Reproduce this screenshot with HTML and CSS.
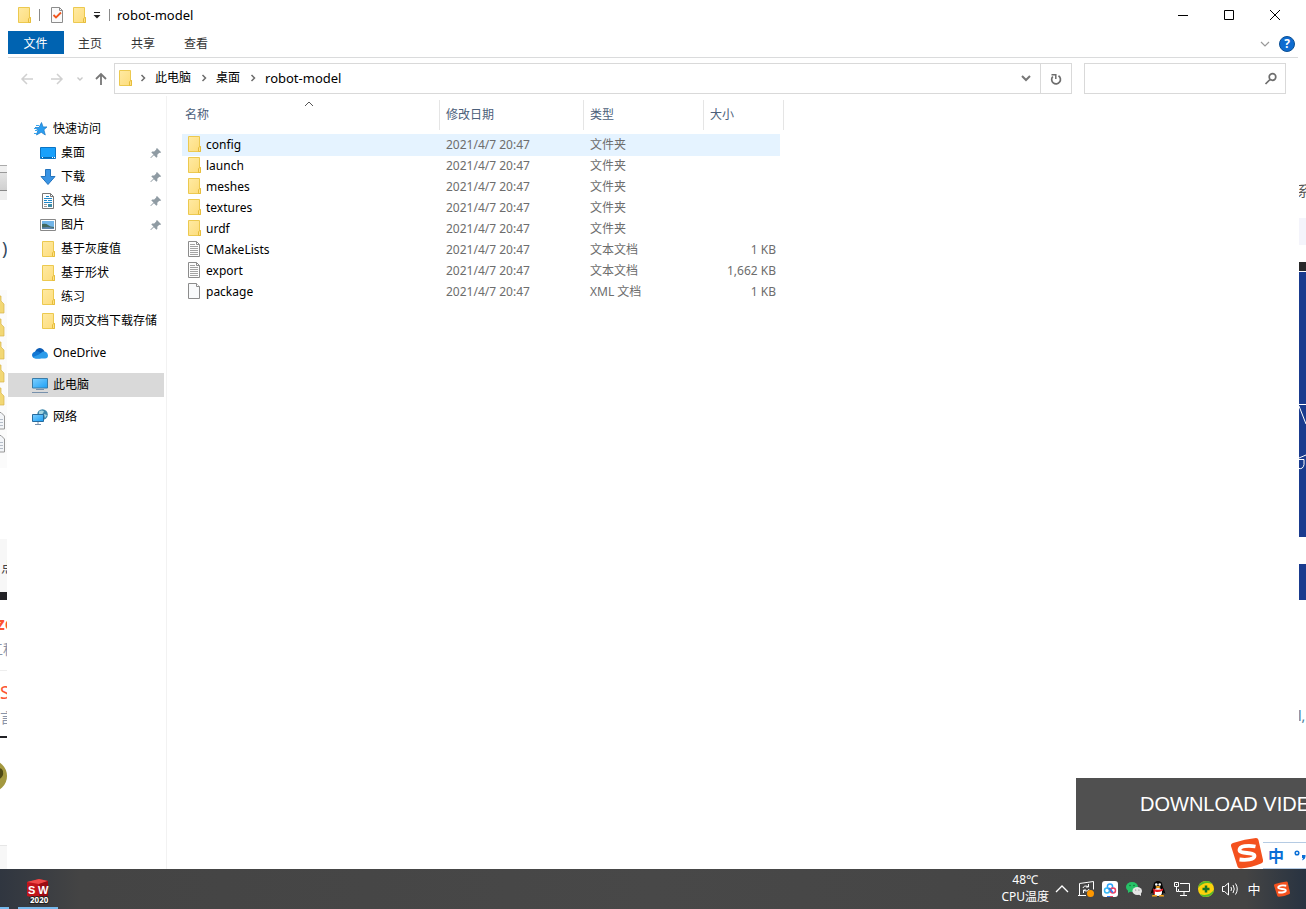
FILE: index.html
```
<!DOCTYPE html>
<html lang="zh-CN">
<head>
    <meta charset="UTF-8">
    <meta name="viewport" content="width=device-width, initial-scale=1.0">

    <title>robot-model</title>

    <link rel="stylesheet" href="styles.css">
</head>

<body>

    <!-- shared icons -->
    <svg class="defs" width="0" height="0" aria-hidden="true">
        <defs>
            <linearGradient id="gFolder" x1="0" y1="0" x2="1" y2="1">
                <stop offset="0" stop-color="#ffeaa3"/>
                <stop offset="1" stop-color="#fddc7a"/>
            </linearGradient>
            <linearGradient id="gScreen" x1="0" y1="0" x2="1" y2="1">
                <stop offset="0" stop-color="#7fd0ff"/>
                <stop offset="1" stop-color="#1c9ff5"/>
            </linearGradient>
        </defs>
        <symbol id="folder" viewBox="0 0 16 16">
            <path d="M2.500 .5h11v10h1v5h-12z" fill="url(#gFolder)" stroke="#ecc94f"/>
            <path d="M12.500 15.500v-3.500l1-1.500h1v5z" fill="#ffe287" stroke="#e6bd3c"/>
        </symbol>
        <symbol id="text-file" viewBox="0 0 16 16">
            <path d="M2.500 .5h8l3 3v12h-11z" fill="#fdfdfd" stroke="#8c8c8c"/>
            <path d="M10.500 .5v3h3" fill="none" stroke="#8c8c8c"/>
            <path d="M4 3.500h5M4 5.500h8M4 7.500h8M4 9.500h8M4 11.500h8M4 13.500h8" stroke="#a3a3a3"/>
        </symbol>
        <symbol id="blank-file" viewBox="0 0 16 16">
            <path d="M2.500 .5h8l3 3v12h-11z" fill="#f9fafb" stroke="#8c8c8c"/>
            <path d="M10.500 .5v3h3" fill="#fff" stroke="#8c8c8c"/>
        </symbol>
        <symbol id="pin" viewBox="0 0 12 12">
            <path d="M7 1l4.200 4.200-1.200.7-.7-.1-2 2 .1 2-1 .9L3.900 8.200 1 11H.5v-.5L3.500 7.600 1.300 5.400l.9-.9 2 .1 2-2L6.200 1.800z" fill="#8f9ba3"/>
        </symbol>
        <symbol id="crumb" viewBox="0 0 8 8">
            <path d="M2.500 1L5.500 4 2.500 7" fill="none" stroke="#6d6d6d" stroke-width="1.500"/>
        </symbol>
        <symbol id="sogou" viewBox="0 0 32 32">
            <path d="M2 6Q14 2 25 1q2 0 2.500 2l4.500 20q.5 2.500-2 3.500-9 4-20 5-3 0-3.500-2L0 9q-.5-2 2-3z" fill="#f4511e"/>
            <path d="M24.500 9.500C17 8 8.500 9 8.500 13c0 4.500 15 1.500 15 6 0 3.500-8 4.500-15 3.500" fill="none" stroke="#fff" stroke-width="3.800"/>
        </symbol>
    </svg>

    <div class="desktop">

        <!-- page showing to the left of the window -->
        <aside class="strip strip-left">
            <div class="toolbar-edge"></div>
            <div class="bit paren">)</div>
            <div class="bit file-edge">
                <svg width="7" height="178" viewBox="0 0 7 178">
                    <g fill="#f2d774" stroke="#d9b64c" stroke-width=".7">
                        <path d="M-3 6h4v5l3 3v9H-3z"/>
                        <path d="M-3 29h4v5l3 3v9H-3z"/>
                        <path d="M-3 52h4v5l3 3v9H-3z"/>
                        <path d="M-3 75h4v5l3 3v9H-3z"/>
                        <path d="M-3 98h4v5l3 3v9H-3z"/>
                    </g>
                    <path d="M-3 122.500h4l3.500 3.500v13H-3zM-3 145.500h4l3.500 3.500v13H-3z" fill="#f3f5f8" stroke="#999"/>
                    <path d="M0 129.500h3M0 132.500h3M0 135.500h3M0 152.500h3M0 155.500h3M0 158.500h3" stroke="#b5bdc8"/>
                </svg>
            </div>
            <div class="bit comment-edge">点</div>
            <div class="bit link-edge">ze</div>
            <div class="bit note-edge">工程</div>
            <div class="bit link-edge second">S</div>
            <div class="bit note-edge second">言</div>
            <svg class="ball" width="7" height="32" viewBox="0 0 7 32">
                <circle cx="-9" cy="16" r="16" fill="#a3983f"/>
                <path d="M-4 9Q4 6 3 15q-2 5-7 4z" fill="#4f4a15"/>
            </svg>
            <div class="footer-edge"></div>
        </aside>

        <main class="explorer">

            <header class="titlebar">
                <svg width="16" height="16"><use href="#folder"/></svg>
                <span class="divider"></span>
                <button class="quick" aria-label="属性">
                    <svg width="16" height="16" viewBox="0 0 16 16">
                        <path d="M2.500 .5h8l3 3v12h-11z" fill="#fafafa" stroke="#8c8c8c"/>
                        <path d="M10.500 .5v3h3" fill="none" stroke="#8c8c8c"/>
                        <path d="M4.500 8l2.500 2.500 5-5" fill="none" stroke="#f0561d" stroke-width="1.800"/>
                    </svg>
                </button>
                <button class="quick" aria-label="新建文件夹">
                    <svg width="16" height="16"><use href="#folder"/></svg>
                </button>
                <button class="quick more" aria-label="自定义快速访问工具栏">
                    <svg width="8" height="8" viewBox="0 0 8 8"><path d="M1 1.500h6" stroke="#222"/><path d="M.5 4h7L4 7.500z" fill="#222"/></svg>
                </button>
                <span class="divider"></span>
                <h1 class="title">robot-model</h1>
                <div class="window-buttons">
                    <button aria-label="最小化"><svg width="12" height="12" viewBox="0 0 12 12"><path d="M1 6.500h10" stroke="#000"/></svg></button>
                    <button aria-label="最大化"><svg width="12" height="12" viewBox="0 0 12 12"><path d="M1.500 1.500h9v9h-9z" fill="none" stroke="#000"/></svg></button>
                    <button aria-label="关闭"><svg width="12" height="12" viewBox="0 0 12 12"><path d="M1 1l10 10M11 1L1 11" stroke="#000"/></svg></button>
                </div>
            </header>

            <nav class="tabs">
                <button class="tab file-tab">文件</button>
                <button class="tab">主页</button>
                <button class="tab">共享</button>
                <button class="tab">查看</button>
                <div class="tabs-end">
                    <button class="plain" aria-label="展开功能区"><svg width="10" height="10" viewBox="0 0 10 10"><path d="M1 3l4 4 4-4" fill="none" stroke="#999" stroke-width="1.200"/></svg></button>
                    <button class="help" aria-label="帮助">?</button>
                </div>
            </nav>

            <div class="location">
                <button class="back" aria-label="后退"><svg width="14" height="14" viewBox="0 0 14 14"><path d="M13 7H2M7 2L2 7l5 5" fill="none" stroke="#d0d0d0" stroke-width="1.500"/></svg></button>
                <button class="forward" aria-label="前进"><svg width="14" height="14" viewBox="0 0 14 14"><path d="M1 7h11M7 2l5 5-5 5" fill="none" stroke="#d0d0d0" stroke-width="1.500"/></svg></button>
                <button class="recent" aria-label="最近浏览的位置"><svg width="8" height="8" viewBox="0 0 8 8"><path d="M1.500 2.500L4 5l2.500-2.500" fill="none" stroke="#c8c8c8" stroke-width="1.400"/></svg></button>
                <button class="up" aria-label="上移"><svg width="14" height="14" viewBox="0 0 14 14"><path d="M7 13V2M2 7l5-5 5 5" fill="none" stroke="#777" stroke-width="1.800"/></svg></button>
                <div class="address">
                    <svg class="place" width="16" height="16"><use href="#folder"/></svg>
                    <svg class="sep" width="8" height="8"><use href="#crumb"/></svg>
                    <a href="#">此电脑</a>
                    <svg class="sep" width="8" height="8"><use href="#crumb"/></svg>
                    <a href="#">桌面</a>
                    <svg class="sep" width="8" height="8"><use href="#crumb"/></svg>
                    <a href="#" class="current">robot-model</a>
                    <button class="history" aria-label="以前的位置"><svg width="10" height="10" viewBox="0 0 10 10"><path d="M1 3l4 4 4-4" fill="none" stroke="#777" stroke-width="2"/></svg></button>
                    <button class="refresh" aria-label="刷新"><svg width="12" height="12" viewBox="0 0 12 12"><path d="M8.500 2.800A4.400 4.400 0 1 1 2.800 3.500" fill="none" stroke="#6d6d6d" stroke-width="1.700"/><path d="M1.500 1.800H5.800V6" fill="none" stroke="#6d6d6d" stroke-width="1.500"/></svg></button>
                </div>
                <div class="search">
                    <input type="text" aria-label="搜索">
                    <svg width="14" height="14" viewBox="0 0 14 14"><circle cx="8.500" cy="5" r="3.300" fill="none" stroke="#6d6d6d" stroke-width="1.700"/><path d="M6 7.500L1.500 12" stroke="#6d6d6d" stroke-width="1.700"/></svg>
                </div>
            </div>

            <div class="content">

                <nav class="sidebar">
                    <a href="#" class="item root">
                        <svg width="16" height="16" viewBox="0 0 16 16"><path d="M9.500 1.500l1.600 4.400H15l-3.100 2.900 1.400 5.200-4.100-2.700L4.500 14l1.400-4.800L3 6.500h4z" fill="#2a9df0" stroke="#1b78c4" stroke-width=".7"/><path d="M4 4.500h3M2 7.500h2.500M3 9.500h2M2 12.500h3" stroke="#3ba6ee"/></svg>
                        <span>快速访问</span>
                    </a>
                    <a href="#" class="item">
                        <svg width="16" height="16" viewBox="0 0 16 16"><path d="M.5 2.500h15v11H.5z" fill="#18a0fb" stroke="#0b74c4"/><path d="M1 12.500h14" stroke="#0668b0"/><path d="M2 12.500h1M12 12.500h1M14 12.500h1" stroke="#fff"/></svg>
                        <span>桌面</span>
                        <svg class="pin" width="12" height="12"><use href="#pin"/></svg>
                    </a>
                    <a href="#" class="item">
                        <svg width="16" height="16" viewBox="0 0 16 16"><path d="M5.500 .5h5v7h4.500L8 15.500 1 7.500h4.500z" fill="#3a94e4" stroke="#2474be"/></svg>
                        <span>下载</span>
                        <svg class="pin" width="12" height="12"><use href="#pin"/></svg>
                    </a>
                    <a href="#" class="item">
                        <svg width="16" height="16" viewBox="0 0 16 16"><path d="M2.500 .5h8l3 3v12h-11z" fill="#fdfdfd" stroke="#777"/><path d="M10.500 .5v3h3" fill="none" stroke="#777"/><path d="M6 3.500h3M4 5.500h8M4 7.500h3M8 7.500h4M4 9.500h8" stroke="#1f88c9"/><path d="M4 11.500h3M4 13.500h3" stroke="#999"/><path d="M8 11h4v3H8z" fill="#3f8aa5"/></svg>
                        <span>文档</span>
                        <svg class="pin" width="12" height="12"><use href="#pin"/></svg>
                    </a>
                    <a href="#" class="item">
                        <svg width="16" height="16" viewBox="0 0 16 16"><path d="M.5 2.500h15v11H.5z" fill="#fff" stroke="#888"/><path d="M2 4h12v8H2z" fill="#72b5e8"/><path d="M2 7q4-1 6 1t6 2v2H2z" fill="#43695f"/><path d="M2 10.500q6-1 12 .5v1H2z" fill="#5d86ae"/></svg>
                        <span>图片</span>
                        <svg class="pin" width="12" height="12"><use href="#pin"/></svg>
                    </a>
                    <a href="#" class="item"><svg width="16" height="16"><use href="#folder"/></svg><span>基于灰度值</span></a>
                    <a href="#" class="item"><svg width="16" height="16"><use href="#folder"/></svg><span>基于形状</span></a>
                    <a href="#" class="item"><svg width="16" height="16"><use href="#folder"/></svg><span>练习</span></a>
                    <a href="#" class="item"><svg width="16" height="16"><use href="#folder"/></svg><span>网页文档下载存储</span></a>
                    <a href="#" class="item root spaced">
                        <svg width="16" height="16" viewBox="0 0 16 16"><path d="M3 7Q4 3.500 7.500 3q3.500 0 5 3.500L10 11z" fill="#0a5cb5"/><path d="M3.500 6.500q2.500-1 4 .8L13 11l-5 2.500H4Q0 13 0 10q.3-3 3.500-3.500z" fill="#1277d3"/><path d="M7 9.500l3.500-2.800Q15.500 6 16 10.500q0 3-3 3H4q-2 0-3-1.500z" fill="#2b9bea"/></svg>
                        <span>OneDrive</span>
                    </a>
                    <a href="#" class="item root spaced selected">
                        <svg width="16" height="16" viewBox="0 0 16 16"><path d="M.5 1.500h15v9.500H.5z" fill="url(#gScreen)" stroke="#3a7ca8"/><path d="M4 12.500h8M0 15.500h16" stroke="#7891ac"/></svg>
                        <span>此电脑</span>
                    </a>
                    <a href="#" class="item root spaced">
                        <svg width="16" height="16" viewBox="0 0 16 16"><circle cx="10.500" cy="5.500" r="5.300" fill="#3d87ac"/><path d="M7 2.500q3-2 5 0l-2 3H7zM12 5l3 1-2 3z" fill="#a5d5e1"/><path d="M.5 5.500h11v7H.5z" fill="url(#gScreen)" stroke="#276b9e"/><path d="M6 13v2M3 15.500h6" stroke="#7891ac"/></svg>
                        <span>网络</span>
                    </a>
                </nav>

                <section class="files">
                    <table class="file-table">
                        <colgroup>
                            <col class="col-name"><col class="col-date"><col class="col-type"><col class="col-size"><col class="col-end">
                        </colgroup>
                        <thead>
                            <tr>
                                <th class="sorted"><div>名称<svg class="sort" width="10" height="6" viewBox="0 0 10 6"><path d="M1 5l4-4 4 4" fill="none" stroke="#555"/></svg></div></th>
                                <th><div>修改日期</div></th>
                                <th><div>类型</div></th>
                                <th colspan="2"><div>大小</div></th>
                            </tr>
                        </thead>
                        <tbody>
                            <tr class="hovered"><td><div class="name"><svg width="16" height="16"><use href="#folder"/></svg>config</div></td><td>2021/4/7 20:47</td><td>文件夹</td><td></td></tr>
                            <tr><td><div class="name"><svg width="16" height="16"><use href="#folder"/></svg>launch</div></td><td>2021/4/7 20:47</td><td>文件夹</td><td></td></tr>
                            <tr><td><div class="name"><svg width="16" height="16"><use href="#folder"/></svg>meshes</div></td><td>2021/4/7 20:47</td><td>文件夹</td><td></td></tr>
                            <tr><td><div class="name"><svg width="16" height="16"><use href="#folder"/></svg>textures</div></td><td>2021/4/7 20:47</td><td>文件夹</td><td></td></tr>
                            <tr><td><div class="name"><svg width="16" height="16"><use href="#folder"/></svg>urdf</div></td><td>2021/4/7 20:47</td><td>文件夹</td><td></td></tr>
                            <tr><td><div class="name"><svg width="16" height="16"><use href="#text-file"/></svg>CMakeLists</div></td><td>2021/4/7 20:47</td><td>文本文档</td><td class="size">1 KB</td></tr>
                            <tr><td><div class="name"><svg width="16" height="16"><use href="#text-file"/></svg>export</div></td><td>2021/4/7 20:47</td><td>文本文档</td><td class="size">1,662 KB</td></tr>
                            <tr><td><div class="name"><svg width="16" height="16"><use href="#blank-file"/></svg>package</div></td><td>2021/4/7 20:47</td><td>XML 文档</td><td class="size">1 KB</td></tr>
                        </tbody>
                    </table>
                </section>

            </div>
        </main>

        <!-- page showing to the right of the window -->
        <aside class="strip strip-right">
            <div class="bit label-edge">系</div>
            <div class="band-edge"></div>
            <svg class="video-edge" width="7" height="338" viewBox="0 0 7 338">
                <path d="M0 0h7v9H0z" fill="#29292b"/>
                <path d="M0 10h7v265H0z" fill="#1a3b8e"/>
                <path d="M0 302h7v36H0z" fill="#1a3b8e"/>
                <path d="M0 142.500h7M0 144l7 18M0 196l7-3M0 197.500h5v5q-1 5-5 4" fill="none" stroke="#fff"/>
            </svg>
            <div class="bit code-edge">l,</div>
        </aside>

        <button class="download">DOWNLOAD VIDEO</button>

        <div class="ime">
            <svg width="32" height="32" viewBox="0 0 32 32"><use href="#sogou"/></svg>
            <div class="ime-bar"><span>中</span>
                <svg width="12" height="14" viewBox="0 0 12 14"><circle cx="3" cy="4" r="1.800" fill="none" stroke="#0a6fd6" stroke-width="1.500"/><path d="M8 6h3.500q.5 4-3.500 5.500l1-2.500H8z" fill="#0a6fd6"/></svg>
            </div>
        </div>
    </div>

    <footer class="taskbar">
        <button class="task first" aria-label="浏览器"></button>
        <button class="task" aria-label="SOLIDWORKS 2020">
            <svg width="24" height="28" viewBox="0 0 24 28">
                <path d="M1 5l12-3 9 2v15l-9 3-12-3z" fill="#c1141b"/>
                <path d="M1 5l12-3 9 2-9 3z" fill="#ef4a49"/>
                <path d="M13 7v15l9-3V4z" fill="#9c0c13"/>
                <text x="2" y="17" class="sw-letter">S</text>
                <text x="12" y="17" class="sw-letter">W</text>
                <text x="4" y="26" class="sw-year">2020</text>
            </svg>
        </button>

        <div class="tray">
            <div class="temperature"><span>48℃</span><span>CPU温度</span></div>
            <button class="tray-icon" aria-label="显示隐藏的图标"><svg width="16" height="16" viewBox="0 0 16 16"><path d="M2 11l6-6 6 6" fill="none" stroke="#fff" stroke-width="1.300"/></svg></button>
            <button class="tray-icon" aria-label="更新"><svg width="16" height="16" viewBox="0 0 16 16"><path d="M8 14.500H1.500v-12L15.500 .5v8M0 14.500h3" fill="none" stroke="#fff"/><path d="M5 7q1-3 5-1.500M10.500 3v3H8M11 8q-1 3-5 1.500M5.500 12V9H8" fill="none" stroke="#fff"/><circle cx="12.500" cy="12.500" r="3.500" fill="#ff9800"/></svg></button>
            <button class="tray-icon" aria-label="网盘"><svg width="16" height="16" viewBox="0 0 16 16"><rect width="16" height="16" rx="3" fill="#fff"/><circle cx="8" cy="5.500" r="2.600" fill="none" stroke="#2ba5ff" stroke-width="1.500"/><circle cx="5" cy="9.500" r="2.500" fill="none" stroke="#36b8f5" stroke-width="1.500"/><circle cx="11" cy="9.500" r="2.500" fill="none" stroke="#ee3f63" stroke-width="1.500"/><path d="M7 7l4 4.500" stroke="#2b7cf5" stroke-width="1.500"/><path d="M5 15.500h3" stroke="#2b7cf5"/><path d="M8 15.500h3" stroke="#ee3f63"/></svg></button>
            <button class="tray-icon" aria-label="微信"><svg width="16" height="16" viewBox="0 0 16 16"><ellipse cx="6" cy="6" rx="6" ry="5" fill="#27c267"/><path d="M2 9v3l3-2z" fill="#27c267"/><circle cx="4" cy="4.500" r=".8" fill="#176e3c"/><circle cx="8" cy="4.500" r=".8" fill="#176e3c"/><ellipse cx="11.200" cy="10" rx="4.800" ry="4" fill="#e5e5e5"/><path d="M12 13l3 2v-3z" fill="#e5e5e5"/><circle cx="9.700" cy="9" r=".6" fill="#777"/><circle cx="12.900" cy="9" r=".6" fill="#777"/></svg></button>
            <button class="tray-icon" aria-label="QQ"><svg width="16" height="16" viewBox="0 0 16 16"><ellipse cx="8" cy="9.500" rx="6" ry="6" fill="#050505"/><circle cx="8" cy="4.500" r="4.500" fill="#050505"/><path d="M2 8l-1.500 5L3 11zM14 8l1.500 5L13 11z" fill="#050505"/><ellipse cx="8" cy="11" rx="4" ry="4" fill="#fff"/><path d="M3 7.500q5 2.500 10 0v2q-5 2.500-8 1v2.500H3.500v-3z" fill="#e62129"/><circle cx="6.300" cy="3.500" r="1.300" fill="#fff"/><circle cx="9.700" cy="3.500" r="1.300" fill="#fff"/><ellipse cx="8" cy="6" rx="2.500" ry=".9" fill="#f9a61a"/><path d="M2 14.500q2-1.500 5 0v1H2zM9 14.500q3-1.500 5 0v1H9z" fill="#f9a61a"/></svg></button>
            <button class="tray-icon" aria-label="网络"><svg width="16" height="16" viewBox="0 0 16 16"><path d="M6 2.500h9.500v8h-11V8M10 11v3M6 14.500h7M.5 1.500h4v4h-4zM2.500 6v4.500h2M2 3.500h1" fill="none" stroke="#fff"/></svg></button>
            <button class="tray-icon" aria-label="安全卫士"><svg width="16" height="16" viewBox="0 0 16 16"><circle cx="8" cy="8" r="8" fill="#fcd20c"/><path d="M0 7Q1 0 9 0q4 .3 5 3Q6 0 0 7zM16 9q-1 7-9 7-4-.3-5-3 8 3 14-4z" fill="#54b72c"/><path d="M8 4.500v7M4.500 8h7" stroke="#167326" stroke-width="2.500"/></svg></button>
            <button class="tray-icon" aria-label="音量"><svg width="16" height="16" viewBox="0 0 16 16"><path d="M.5 5.500h2L6.500 2v12l-4-3.500h-2zM9 6q1 2 0 4M11 4q2.500 4 0 8M13.500 2.500q3.500 5.500 0 11" fill="none" stroke="#fff"/></svg></button>
            <button class="tray-icon lang">中</button>
            <button class="tray-icon sogou" aria-label="搜狗输入法"><svg width="16" height="16" viewBox="0 0 16 16"><use href="#sogou" width="16" height="16"/></svg></button>
        </div>
    </footer>

</body>

</html>
```
FILE: styles.css
```
* {
    box-sizing: border-box;
}

body {
    margin: 0;
    height: 100vh;
    display: flex;
    flex-direction: column;
    overflow: hidden;
    background-color: #ffffff;
    color: #000000;
    font-family: "Noto Sans", "Noto Sans CJK SC", sans-serif;
    font-size: 12px;
    line-height: 16px;
}

button {
    margin: 0;
    padding: 0;
    border: none;
    background: none;
    color: inherit;
    font: inherit;
}

a {
    color: inherit;
    text-decoration: none;
}

svg {
    display: block;
    flex-shrink: 0;
}

.defs {
    position: absolute;
}

.desktop {
    position: relative;
    flex: 1;
    min-height: 0;
    display: flex;
    overflow: hidden;
}

/* slivers of the page behind the window */
.strip {
    flex: 0 0 8px;
    overflow: hidden;
}

.strip-left {
    padding-right: 1px;
}

.strip-right {
    padding-left: 1px;
}

.bit {
    overflow: hidden;
    white-space: nowrap;
}

.toolbar-edge {
    height: 35px;
    margin-top: 165px;
    border-top: 1px solid #aaaaaa;
    background: linear-gradient(#f0f0f0 0 6px, #999999 6px 7px, #e4e4e4 7px, #d0d0d0 24px, #888888 24px 25px, #eeeeee 25px);
}

.paren {
    margin-top: 38px;
    height: 20px;
    font-size: 18px;
    line-height: 20px;
    color: #34495e;
    text-indent: 2px;
}

.file-edge {
    margin-top: 32px;
    background-color: #fbfbfb;
}

.comment-edge {
    margin-top: 71px;
    height: 61px;
    padding-top: 19px;
    border-bottom: 8px solid #222226;
    background-color: #f7f7f7;
    color: #444444;
    font-size: 14px;
    line-height: 18px;
    text-indent: 1px;
}

.link-edge {
    margin-top: 14px;
    height: 20px;
    color: #fc5531;
    font-size: 18px;
    font-weight: bold;
    line-height: 18px;
    text-indent: -4px;
}

.note-edge {
    height: 37px;
    padding-top: 6px;
    border-bottom: 1px solid #eeeeee;
    color: #8a94a8;
    font-size: 14px;
    line-height: 18px;
    text-indent: -11px;
}

.link-edge.second {
    margin-top: 12px;
    font-weight: normal;
    text-indent: 0;
}

.note-edge.second {
    height: 35px;
    border-bottom: 2px solid #222226;
    text-indent: 0;
}

.ball {
    margin-top: 22px;
}

.footer-edge {
    margin-top: 53px;
    height: 24px;
    border-top: 1px solid #e6e6e6;
    background-color: #f7f7f7;
}

.label-edge {
    margin-top: 182px;
    height: 18px;
    color: #555555;
    font-size: 14px;
    line-height: 18px;
    text-indent: -2px;
}

.band-edge {
    margin: 18px 0 17px;
    height: 27px;
    background-color: #f4f4fb;
}

.code-edge {
    margin-top: 106px;
    height: 20px;
    color: #4d7c9a;
    font-size: 14px;
    line-height: 20px;
    text-indent: -1px;
}

/* explorer window */
.explorer {
    flex: 1;
    min-width: 0;
    display: flex;
    flex-direction: column;
    background-color: #ffffff;
}

.titlebar {
    display: flex;
    align-items: center;
    height: 31px;
    padding: 0 0 1px 8px;
}

.divider {
    width: 1px;
    height: 12px;
    margin: 0 7px;
    background-color: #8a8a8a;
}

.quick {
    margin-left: 2px;
}

.quick + .quick {
    margin-left: 6px;
}

.quick.more {
    margin-right: 1px;
}

.title {
    margin: 0;
    font-size: 13px;
    font-weight: normal;
    line-height: 18px;
}

.window-buttons {
    display: flex;
    margin-left: auto;
}

.window-buttons button {
    display: flex;
    align-items: center;
    justify-content: center;
    width: 46px;
    height: 30px;
}

.tabs {
    display: flex;
    height: 27px;
    border-bottom: 1px solid #dadbdc;
    color: #333333;
}

.tab {
    width: 53px;
    height: 23px;
    padding: 2px 1px 0 0;
}

.file-tab {
    width: 56px;
    background-color: #0063b1;
    color: #ffffff;
}

.tabs-end {
    display: flex;
    align-items: center;
    gap: 9px;
    margin-left: auto;
    padding-right: 3px;
}

.help {
    width: 16px;
    height: 16px;
    border: 1px solid #0a4f94;
    border-radius: 50%;
    background-color: #0f6cd0;
    color: #ffffff;
    font-weight: bold;
    line-height: 14px;
}

.location {
    display: flex;
    align-items: center;
    padding: 5px 12px 0;
}

.back {
    margin-right: 16px;
}

.forward {
    margin-right: 12px;
}

.recent {
    margin-right: 10px;
}

.address {
    flex: 1;
    display: flex;
    align-items: center;
    height: 31px;
    margin: 0 12px 0 6px;
    padding: 0 0 1px 2px;
    border: 1px solid #d9d9d9;
}

.address a {
    margin-bottom: 1px;
}

.sep {
    margin: 0 8px;
}

.sep + a {
    margin-right: 1px;
}

.place + .sep {
    margin-left: 6px;
}

.address .current {
    font-size: 13px;
}

.history {
    margin-left: auto;
    padding: 0 9px;
}

.refresh {
    align-self: stretch;
    padding: 0 9px;
    margin-bottom: -1px;
    border-left: 1px solid #d9d9d9;
}

.search {
    display: flex;
    align-items: center;
    width: 202px;
    height: 31px;
    padding-right: 7px;
    border: 1px solid #d9d9d9;
}

.search input {
    flex: 1;
    min-width: 0;
    border: none;
    outline: none;
    background: none;
    font: inherit;
}

.content {
    flex: 1;
    min-height: 0;
    display: flex;
    padding-top: 2px;
}

.sidebar {
    flex: 0 0 159px;
    padding: 21px 2px 0 0;
    border-right: 1px solid #f2f2f2;
}

.item {
    display: flex;
    align-items: center;
    gap: 5px;
    height: 24px;
    padding: 0 2px 1px 32px;
    white-space: nowrap;
}

.item.root {
    padding-left: 24px;
}

.item.spaced {
    margin-top: 8px;
}

.item.selected {
    background-color: #d9d9d9;
}

.pin {
    margin-left: auto;
}

.files {
    flex: 1;
    padding-left: 15px;
}

.file-table {
    width: 602px;
    table-layout: fixed;
    border-collapse: collapse;
    color: #6d6d6d;
}

.col-name {
    width: 258px;
}

.col-date {
    width: 144px;
}

.col-type {
    width: 120px;
}

.col-size {
    width: 76px;
}

.col-end {
    width: 4px;
}

.file-table th {
    height: 38px;
    padding: 4px 0;
    color: #4c607a;
    font-weight: normal;
    text-align: left;
}

.file-table th div {
    height: 30px;
    padding-left: 6px;
    border-right: 1px solid #e5e5e5;
    line-height: 30px;
}

.file-table .sorted div {
    position: relative;
    padding-left: 3px;
}

.sort {
    position: absolute;
    top: 1px;
    left: 122px;
}

.file-table td {
    height: 21px;
    padding: 0 0 0 6px;
    white-space: nowrap;
}

.file-table td:first-child {
    padding-left: 4px;
    color: #000000;
}

.file-table .size {
    padding-right: 4px;
    text-align: right;
}

.hovered td {
    background-color: #e5f3ff;
    box-shadow: 0 1px #e5f3ff;
}

.name {
    display: flex;
    align-items: center;
    gap: 4px;
}

.name svg {
    margin-bottom: 2px;
}

/* things floating over the desktop */
.download {
    position: absolute;
    right: 0;
    bottom: 39px;
    width: 230px;
    height: 52px;
    padding-left: 64px;
    overflow: hidden;
    background-color: #505050;
    color: #ffffff;
    font-family: "Liberation Sans", sans-serif;
    font-size: 20px;
    text-align: left;
    white-space: nowrap;
}

.ime {
    position: absolute;
    right: 0;
    bottom: 0;
    display: flex;
    align-items: flex-end;
    width: 75px;
}

.ime-bar {
    flex: 1;
    display: flex;
    align-items: center;
    justify-content: space-between;
    height: 27px;
    padding-left: 5px;
    overflow: hidden;
    border-top: 1px solid #b5cbe3;
    border-bottom: 1px solid #b5cbe3;
    color: #0a6fd6;
    font-size: 16px;
    font-weight: bold;
}

.taskbar {
    display: flex;
    height: 40px;
    background: linear-gradient(90deg, #303640, #444444 80px, #484848 50%, #444444 calc(100% - 60px), #283341);
    color: #ffffff;
}

.task {
    width: 40px;
    height: 40px;
    padding: 5px 8px 0;
    border-bottom: 2px solid #76b9ed;
}

.task.first {
    width: 9px;
    margin-right: 9px;
    padding: 0;
}

.sw-letter {
    fill: #ffffff;
    font-family: "Liberation Sans", sans-serif;
    font-size: 11px;
    font-weight: bold;
}

.sw-year {
    fill: #ffffff;
    stroke: #222222;
    stroke-width: 2px;
    paint-order: stroke;
    font-size: 8px;
    font-weight: bold;
}

.tray {
    display: flex;
    align-items: center;
    margin-left: auto;
    padding-right: 12px;
}

.temperature {
    display: flex;
    flex-direction: column;
    align-items: center;
    padding: 0 1px 2px 0;
    line-height: 17px;
}

.tray-icon {
    display: flex;
    align-items: center;
    justify-content: center;
    width: 24px;
    height: 40px;
}

.lang {
    font-size: 13px;
}

.tray-icon.sogou {
    margin-left: 4px;
}
```
